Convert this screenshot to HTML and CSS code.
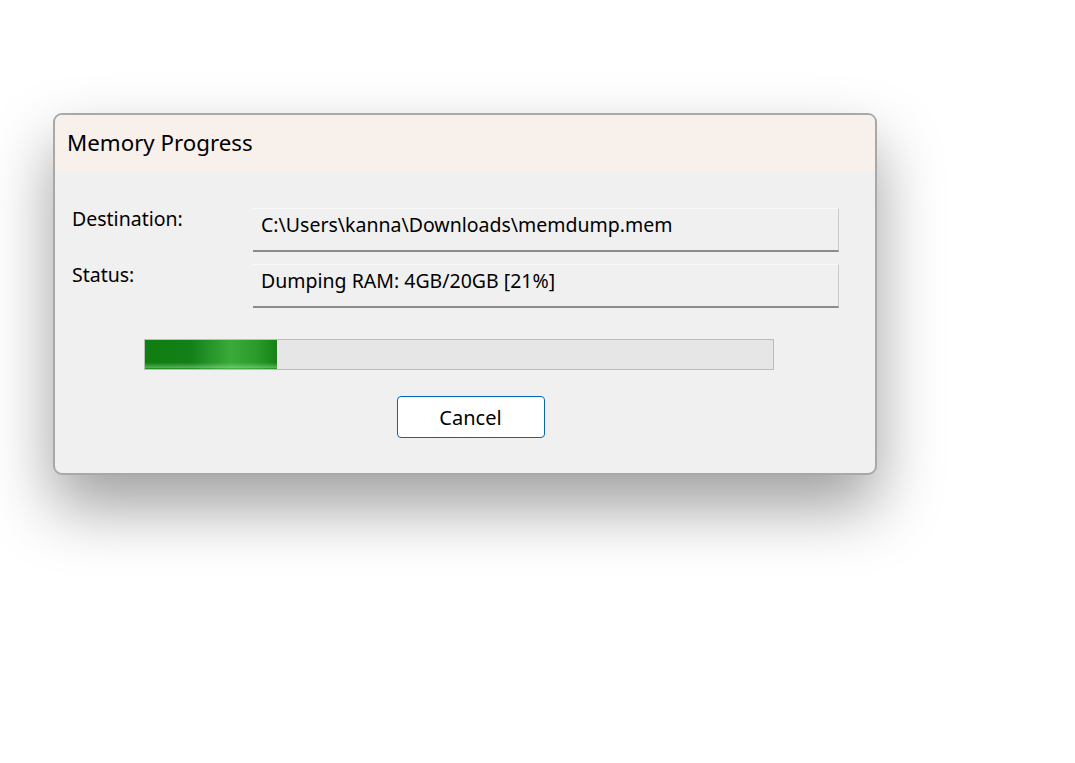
FILE: index.html
```html
<!DOCTYPE html>
<html>
<head>
<meta charset="utf-8">
<link rel="stylesheet" href="styles.css">
</head>
<body>
<div class="window">
  <div class="titlebar">Memory Progress</div>
  <div class="content">
    <div class="row">
      <div class="label">Destination:</div>
      <div class="field">C:\Users\kanna\Downloads\memdump.mem</div>
    </div>
    <div class="row">
      <div class="label">Status:</div>
      <div class="field">Dumping RAM: 4GB/20GB [21%]</div>
    </div>
    <div class="progress">
      <div class="fill" style="width: 21%"></div>
    </div>
    <div class="actions">
      <button class="btn">Cancel</button>
    </div>
  </div>
</div>
</body>
</html>
```
FILE: styles.css
```css
html, body {
  margin: 0;
  padding: 0;
  background: #ffffff;
  min-height: 100%;
}
html {
  height: 100%;
}
body {
  padding: 113px 0 0 53px;
  box-sizing: border-box;
  font-family: "Noto Sans", "Open Sans", sans-serif;
  color: #000;
}
.window {
  width: 820px;
  height: 358px;
  border: 2px solid #a8a8a8;
  border-radius: 9px;
  background: #f0f0f0;
  box-shadow: 0 32px 64px rgba(0,0,0,0.38);
  overflow: hidden;
  box-sizing: content-box;
}
.titlebar {
  height: 56px;
  background: #f8f1eb;
  font-size: 22.3px;
  line-height: 56px;
  padding-left: 12px;
  box-sizing: border-box;
}
.content {
  padding: 37px 0 0 17px;
}
.row {
  display: flex;
  height: 44px;
  margin-bottom: 12px;
}
.label {
  width: 181px;
  font-size: 19.5px;
  line-height: 28px;
  margin-top: -3px;
}
.field {
  width: 577px;
  height: 41px;
  border-top: 1px solid #fafafa;
  border-right: 1px solid #c8c8c8;
  border-bottom: 2px solid #8c8c8c;
  box-sizing: content-box;
  font-size: 19.5px;
  padding-left: 8px;
  line-height: 32px;
}
.progress {
  margin: 31px 0 0 72px;
  width: 628px;
  height: 29px;
  border: 1px solid #bcbcbc;
  background: #e6e6e6;
}
.fill {
  height: 100%;
  background:
    linear-gradient(to bottom, rgba(255,255,255,0) 0%, rgba(255,255,255,0) 78%, rgba(160,230,160,0.45) 95%, rgba(255,255,255,0) 100%),
    linear-gradient(to right, #0f7d0f 0%, #13801a 35%, #3aab3a 65%, #2a9a2a 85%, #148314 100%);
}
.actions {
  display: flex;
  justify-content: center;
  padding-right: 6px;
  margin-top: 26px;
}
.btn {
  width: 148px;
  height: 42px;
  border: 1px solid #0067c0;
  border-radius: 4px;
  background: #ffffff;
  font-family: "Noto Sans", "Open Sans", sans-serif;
  font-size: 20px;
  color: #000;
  padding: 0;
}
```
